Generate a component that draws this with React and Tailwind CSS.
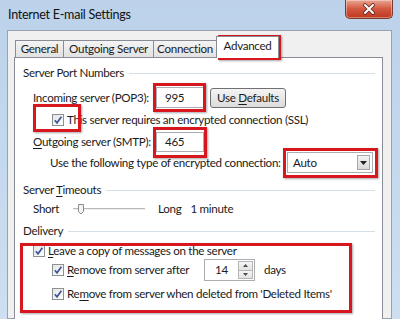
import React from 'react';

const Check = () => (
  <span className="flex h-[12px] w-[12px] shrink-0 items-center justify-center border border-[#8e8f8f] bg-gradient-to-br from-[#e4e4e4] to-[#ffffff]">
    <svg viewBox="0 0 10 10" className="h-[10px] w-[10px]">
      <path d="M1.8 5.2 L4 7.8 L8.4 1.8" fill="none" stroke="#3b5894" strokeWidth="1.7" />
    </svg>
  </span>
);

const U = ({ children }) => <span className="underline underline-offset-2">{children}</span>;

const GroupTitle = ({ children, className = '' }) => (
  <div className={`flex h-[16px] items-center pr-[7px] ${className}`}>
    <span>{children}</span>
    <span className="ml-[5px] h-px flex-1 bg-[#d5dfe5]" />
  </div>
);

const Tab = ({ label, className = '' }) => (
  <div
    className={`-ml-px flex h-[17px] items-center justify-center border border-b-0 border-[#898c95] bg-gradient-to-b from-[#f4f4f4] to-[#e1e1e1] ${className}`}
  >
    {label}
  </div>
);

export default function App() {
  return (
    <div className="relative h-[319px] w-[400px] overflow-hidden whitespace-nowrap bg-gradient-to-b from-[#bcd2ea] to-[#cddff1] font-['Lato',sans-serif] text-[11.6px] leading-none tracking-[-0.3px] text-[#1b1b1b]">
      {/* title bar */}
      <div className="flex h-[30px] items-center pl-[8px] text-[12.6px] text-[#111]">Internet E-mail Settings</div>

      {/* close button */}
      <div className="absolute right-[7px] top-0 flex h-[19px] w-[48px] items-center justify-center rounded-b-[5px] border border-t-0 border-[#7b3b31] bg-gradient-to-b from-[#e9a594] via-[#d2563e] to-[#c0371f] shadow-[inset_0_0_0_1px_rgba(255,255,255,0.35)]">
        <svg viewBox="0 0 14 12" className="h-[12px] w-[14px]">
          <path d="M3 2 L11 10 M11 2 L3 10" stroke="#5a2a22" strokeWidth="3.6" strokeLinecap="round" />
          <path d="M3 2 L11 10 M11 2 L3 10" stroke="#fff" strokeWidth="2" strokeLinecap="round" />
        </svg>
      </div>

      {/* dialog body */}
      <div className="ml-[7px] mr-[8px] h-[289px] border border-[#97a3b2] bg-[#f0f0f0] pl-[6px] pr-[8px] pt-[5px]">
        {/* tabs */}
        <div className="flex h-[21px] items-end pl-[2px]">
          <Tab label="General" className="w-[49px]" />
          <Tab label="Outgoing Server" className="w-[91px]" />
          <Tab label="Connection" className="w-[64px]" />
          <div className="relative z-10 -mb-px -ml-px flex h-[22px] w-[63px] items-start justify-center border border-b-0 border-[#898c95] bg-white pt-[3px]">
            Advanced
          </div>
        </div>

        {/* panel */}
        <div className="h-[270px] border border-[#898c95] bg-white pl-[8px] pt-[7px]">
          <GroupTitle>Server Port Numbers</GroupTitle>

          <div className="mt-[6px] flex h-[21px] items-center pl-[10px]">
            <span className="w-[123px]">
              I<U>n</U>coming server (POP3):
            </span>
            <div className="flex h-[21px] w-[48px] items-center border border-[#abadb3] bg-white pl-[8px]">995</div>
            <div className="ml-[6px] flex h-[20px] w-[76px] items-center justify-center rounded-[3px] border border-[#707070] bg-gradient-to-b from-[#f4f4f4] to-[#dcdcdc]">
              Use&nbsp;<U>D</U>efaults
            </div>
          </div>

          <div className="mt-[4px] flex h-[16px] items-center pl-[29px]">
            <Check />
            <span className="ml-[3px]">This server requires an encrypted connection (SSL)</span>
          </div>

          <div className="mt-[4px] flex h-[20px] items-center pl-[10px]">
            <span className="w-[123px]">
              <U>O</U>utgoing server (SMTP):
            </span>
            <div className="flex h-[20px] w-[48px] items-center border border-[#abadb3] bg-white pl-[8px]">465</div>
          </div>

          <div className="flex h-[21px] items-center pl-[27px]">
            <span className="w-[237px]">Use the following type of encrypted connection:</span>
            <div className="flex h-[21px] w-[86px] items-center justify-between border border-[#abadb3] bg-white pl-[5px] pr-[2px]">
              <span>Auto</span>
              <span className="flex h-[15px] w-[13px] items-center justify-center border border-[#a7a7a7] bg-gradient-to-b from-[#f3f3f3] to-[#dadada]">
                <svg viewBox="0 0 7 4" className="h-[4px] w-[7px]">
                  <path d="M0 0 H7 L3.5 4 Z" fill="#222" />
                </svg>
              </span>
            </div>
          </div>

          <GroupTitle className="mt-[9px]">
            Server <U>T</U>imeouts
          </GroupTitle>

          <div className="mt-[3px] flex h-[16px] items-center pl-[10px]">
            <span className="w-[39px]">Short</span>
            <svg viewBox="0 0 74 12" className="h-[12px] w-[74px]">
              <line x1="1" y1="5.5" x2="73" y2="5.5" stroke="#b9b9b9" strokeWidth="1" />
              <line x1="1" y1="6.5" x2="73" y2="6.5" stroke="#ececec" strokeWidth="1" />
              <path d="M6.5 1.5 H11.5 V8.5 L9 11 L6.5 8.5 Z" fill="#f4f4f4" stroke="#8a8a8a" strokeWidth="1" />
            </svg>
            <span className="ml-[12px]">Long</span>
            <span className="ml-[9px]">1 minute</span>
          </div>

          <GroupTitle className="mt-[6px]">Delivery</GroupTitle>

          <div className="mt-[4px] flex h-[16px] items-center pl-[10px]">
            <Check />
            <span className="ml-[3px]">
              <U>L</U>eave a copy of messages on the server
            </span>
          </div>

          <div className="flex h-[22px] items-center pl-[29px]">
            <Check />
            <span className="ml-[3px] w-[137px]">
              <U>R</U>emove from server after
            </span>
            <div className="flex h-[22px] w-[51px] items-center justify-between border border-[#abadb3] bg-white pl-[10px] pr-px">
              <span>14</span>
              <span className="flex h-[18px] w-[15px] flex-col">
                <span className="flex flex-1 items-center justify-center border border-[#b5b5b5] bg-gradient-to-b from-[#f6f6f6] to-[#e2e2e2]">
                  <svg viewBox="0 0 5 3" className="h-[3px] w-[5px]">
                    <path d="M0 3 H5 L2.5 0 Z" fill="#4a4a4a" />
                  </svg>
                </span>
                <span className="flex flex-1 items-center justify-center border border-t-0 border-[#b5b5b5] bg-gradient-to-b from-[#f6f6f6] to-[#e2e2e2]">
                  <svg viewBox="0 0 5 3" className="h-[3px] w-[5px]">
                    <path d="M0 0 H5 L2.5 3 Z" fill="#4a4a4a" />
                  </svg>
                </span>
              </span>
            </div>
            <span className="ml-[9px]">days</span>
          </div>

          <div className="mt-[5px] flex h-[16px] items-center pl-[29px]">
            <Check />
            <span className="ml-[3px]">
              Re<U>m</U>ove from server when deleted from 'Deleted Items'
            </span>
          </div>
        </div>
      </div>

      {/* red annotation boxes */}
      <div className="pointer-events-none absolute left-[218px] top-[35px] h-[25px] w-[63px] border-[3px] border-[#d7161e] shadow-[1px_1px_2px_rgba(0,0,0,0.35)]" />
      <div className="pointer-events-none absolute left-[153px] top-[83px] h-[29px] w-[53px] border-[3px] border-[#d7161e] shadow-[1px_1px_2px_rgba(0,0,0,0.35)]" />
      <div className="pointer-events-none absolute left-[33px] top-[104px] h-[28px] w-[48px] border-[3px] border-[#d7161e] shadow-[1px_1px_2px_rgba(0,0,0,0.35)]" />
      <div className="pointer-events-none absolute left-[153px] top-[127px] h-[31px] w-[54px] border-[3px] border-[#d7161e] shadow-[1px_1px_2px_rgba(0,0,0,0.35)]" />
      <div className="pointer-events-none absolute left-[283px] top-[148px] h-[30px] w-[95px] border-[3px] border-[#d7161e] shadow-[1px_1px_2px_rgba(0,0,0,0.35)]" />
      <div className="pointer-events-none absolute left-[20px] top-[243px] h-[70px] w-[332px] border-[3px] border-[#d7161e] shadow-[1px_1px_2px_rgba(0,0,0,0.35)]" />
    </div>
  );
}
